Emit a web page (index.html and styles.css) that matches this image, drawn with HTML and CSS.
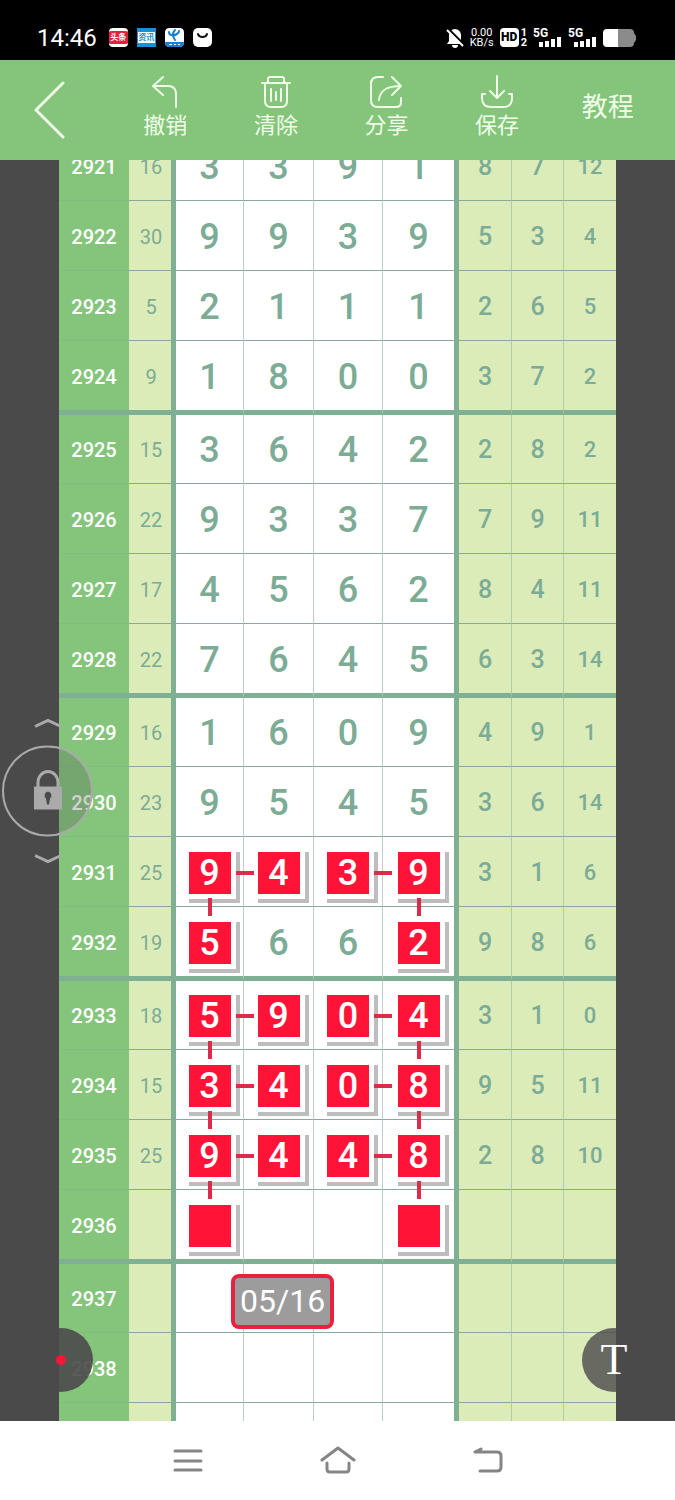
FILE: index.html
```html
<!DOCTYPE html>
<html lang="zh-CN">
<head>
    <meta charset="UTF-8">
    <meta name="viewport" content="width=device-width, initial-scale=1.0">
    <title>走势图</title>
    <link rel="stylesheet" href="styles.css">
</head>
<body>

    <!-- Status bar -->
    <div class="status-bar">
        <span class="time">14:46</span>
        <div class="app-icons">
            <span class="app app-news">头条</span>
            <span class="app app-blue"><b>资讯</b></span>
            <svg class="app" viewBox="0 0 19 19">
                <rect width="19" height="19" rx="4" fill="#fff"/>
                <path d="M0 14h19v1a4 4 0 0 1-4 4H4a4 4 0 0 1-4-4z" fill="#1b7fd0"/>
                <path d="M4 4c0 4 5 4 9 1M10 2c-3 3-3 6 0 10M14 3c0 3-3 4-6 5" fill="none" stroke="#1b7fd0" stroke-width="2" stroke-linecap="round"/>
                <path d="M4 16.500h3M9 16.500h2M13 16.500h2" stroke="#fff" stroke-width="1"/>
            </svg>
            <svg class="app" viewBox="0 0 19 19">
                <rect width="19" height="19" rx="5" fill="#fff"/>
                <path d="M5 6c1 4 8 4 9 0" fill="none" stroke="#111" stroke-width="2" stroke-linecap="round"/>
            </svg>
        </div>
        <div class="system-icons">
            <svg width="18" height="20" viewBox="0 0 18 20">
                <path d="M9 1a6 6 0 0 0-6 6v6l-2 3h16l-2-3V7a6 6 0 0 0-6-6zM6 17h6a3 3 0 0 1-6 0z" fill="#fff"/>
                <path d="M1 0l17 17" stroke="#000" stroke-width="3"/>
                <path d="M1 2l16 16" stroke="#fff" stroke-width="2"/>
            </svg>
            <span class="speed">0.00<br>KB/s</span>
            <span class="hd"><b>HD</b><span>1<br>2</span></span>
            <span class="signal"><span>5G</span>
                <svg width="24" height="11" viewBox="0 0 24 11"><path d="M3 11V6M9 11V5M15 11V3M21 11V1" stroke="#fff" stroke-width="4"/></svg>
            </span>
            <span class="signal"><span>5G</span>
                <svg width="24" height="11" viewBox="0 0 24 11"><path d="M3 11V6M9 11V5M15 11V3M21 11V1" stroke="#fff" stroke-width="4"/></svg>
            </span>
            <svg width="34" height="18" viewBox="0 0 34 18">
                <path d="M15 0h12a4 4 0 0 1 4 4l2 3v4l-2 3a4 4 0 0 1-4 4H15z" fill="#8b8b8b"/>
                <path d="M4 0h11v18H4a4 4 0 0 1-4-4V4a4 4 0 0 1 4-4z" fill="#fff"/>
            </svg>
        </div>
    </div>

    <!-- Toolbar -->
    <header class="toolbar">
        <button class="back" aria-label="返回">
            <svg width="32" height="58" viewBox="0 0 32 58"><path d="M29 2L2 29l27 27"/></svg>
        </button>
        <button class="tool">
            <svg width="34" height="34" viewBox="0 0 34 34"><path d="M15 2L5 11l10 9M5 11h15q8 0 8 8v13"/></svg>
            撤销
        </button>
        <button class="tool">
            <svg width="34" height="34" viewBox="0 0 34 34"><path d="M3 8h28M9 8V4q0-2 2-2h12q2 0 2 2v4M6 8v18q0 6 6 6h10q6 0 6-6V8M12 14v12M17 17v8M22 14v12"/></svg>
            清除
        </button>
        <button class="tool">
            <svg width="34" height="34" viewBox="0 0 34 34"><path d="M14 2h-5q-7 0-7 7v16q0 7 7 7h18q5 0 5-5v-4M23 2l9 9-9 9M32 11C18 11 11 15 10 25"/></svg>
            分享
        </button>
        <button class="tool">
            <svg width="34" height="34" viewBox="0 0 34 34"><path d="M17 1v22M10 16l7 7 7-7M5 19H2v4q0 9 9 9h12q9 0 9-9v-4h-3"/></svg>
            保存
        </button>
        <button class="tool tutorial">教程</button>
    </header>

    <!-- Number chart -->
    <main class="board">
        <table class="chart">
            <colgroup>
                <col class="c-issue"><col class="c-sum">
                <col class="c-n1"><col class="c-n2"><col class="c-n3"><col class="c-n4">
                <col class="c-t1"><col class="c-t2"><col class="c-t3">
            </colgroup>
            <tbody>
                <tr><th>2921</th><td>16</td><td>3</td><td>3</td><td>9</td><td>1</td><td>8</td><td>7</td><td>12</td></tr>
                <tr><th>2922</th><td>30</td><td>9</td><td>9</td><td>3</td><td>9</td><td>5</td><td>3</td><td>4</td></tr>
                <tr><th>2923</th><td>5</td><td>2</td><td>1</td><td>1</td><td>1</td><td>2</td><td>6</td><td>5</td></tr>
                <tr><th>2924</th><td>9</td><td>1</td><td>8</td><td>0</td><td>0</td><td>3</td><td>7</td><td>2</td></tr>
                <tr><th>2925</th><td>15</td><td>3</td><td>6</td><td>4</td><td>2</td><td>2</td><td>8</td><td>2</td></tr>
                <tr><th>2926</th><td>22</td><td>9</td><td>3</td><td>3</td><td>7</td><td>7</td><td>9</td><td>11</td></tr>
                <tr><th>2927</th><td>17</td><td>4</td><td>5</td><td>6</td><td>2</td><td>8</td><td>4</td><td>11</td></tr>
                <tr><th>2928</th><td>22</td><td>7</td><td>6</td><td>4</td><td>5</td><td>6</td><td>3</td><td>14</td></tr>
                <tr><th>2929</th><td>16</td><td>1</td><td>6</td><td>0</td><td>9</td><td>4</td><td>9</td><td>1</td></tr>
                <tr><th>2930</th><td>23</td><td>9</td><td>5</td><td>4</td><td>5</td><td>3</td><td>6</td><td>14</td></tr>
                <tr>
                    <th>2931</th><td>25</td>
                    <td><span class="pick right down">9<i></i></span></td><td><span class="pick">4</span></td>
                    <td><span class="pick right">3</span></td><td><span class="pick down">9<i></i></span></td>
                    <td>3</td><td>1</td><td>6</td>
                </tr>
                <tr>
                    <th>2932</th><td>19</td>
                    <td><span class="pick">5</span></td><td>6</td>
                    <td>6</td><td><span class="pick">2</span></td>
                    <td>9</td><td>8</td><td>6</td>
                </tr>
                <tr>
                    <th>2933</th><td>18</td>
                    <td><span class="pick right down">5<i></i></span></td><td><span class="pick">9</span></td>
                    <td><span class="pick right">0</span></td><td><span class="pick down">4<i></i></span></td>
                    <td>3</td><td>1</td><td>0</td>
                </tr>
                <tr>
                    <th>2934</th><td>15</td>
                    <td><span class="pick right down">3<i></i></span></td><td><span class="pick">4</span></td>
                    <td><span class="pick right">0</span></td><td><span class="pick down">8<i></i></span></td>
                    <td>9</td><td>5</td><td>11</td>
                </tr>
                <tr>
                    <th>2935</th><td>25</td>
                    <td><span class="pick right down">9<i></i></span></td><td><span class="pick">4</span></td>
                    <td><span class="pick right">4</span></td><td><span class="pick down">8<i></i></span></td>
                    <td>2</td><td>8</td><td>10</td>
                </tr>
                <tr>
                    <th>2936</th><td></td>
                    <td><span class="pick"></span></td><td></td>
                    <td></td><td><span class="pick"></span></td>
                    <td></td><td></td><td></td>
                </tr>
                <tr><th>2937</th><td></td><td></td><td></td><td></td><td></td><td></td><td></td><td></td></tr>
                <tr><th>2938</th><td></td><td></td><td></td><td></td><td></td><td></td><td></td><td></td></tr>
                <tr><th></th><td></td><td></td><td></td><td></td><td></td><td></td><td></td><td></td></tr>
            </tbody>
        </table>

        <!-- Floating things over the chart -->
        <div class="date-tag">05/16</div>

        <div class="lock">
            <svg width="28" height="10" viewBox="0 0 28 10"><path d="M1 8l13-6 13 6"/></svg>
            <button aria-label="锁定">
                <svg width="30" height="42" viewBox="0 0 30 42">
                    <path d="M5 18v-5a10 11 0 0 1 20 0v5"/>
                    <path class="body" fill-rule="evenodd" d="M1 17h28v23H1zM15 22a4 4 0 0 0-2 7l1 6h2l1-6a4 4 0 0 0-2-7z"/>
                </svg>
            </button>
            <svg width="28" height="10" viewBox="0 0 28 10"><path d="M1 2l13 6 13-6"/></svg>
        </div>

        <button class="disc color-disc" aria-label="颜色"><i></i></button>
        <button class="disc text-disc">T</button>
    </main>

    <!-- System navigation -->
    <nav class="nav-bar">
        <button aria-label="菜单">
            <svg width="30" height="26" viewBox="0 0 30 26"><path d="M2 3h26M2 13h26M2 22h26"/></svg>
        </button>
        <button aria-label="主页">
            <svg width="36" height="30" viewBox="0 0 36 30"><path d="M2 14L18 2l16 12M7 17v6q0 3 3 3h16q3 0 3-3v-6"/></svg>
        </button>
        <button aria-label="后退">
            <svg width="32" height="28" viewBox="0 0 32 28"><path d="M9 2L3 5h22q4 0 4 4v11q0 4-4 4H8"/></svg>
        </button>
    </nav>

</body>
</html>
```

FILE: styles.css
```css
*,
*::before,
*::after {
    box-sizing: border-box;
}

body {
    margin: 0;
    height: 100vh;
    display: flex;
    flex-direction: column;
    font-family: Roboto, "Noto Sans CJK SC", sans-serif;
    background: #4b4a4b;
}

button {
    border: none;
    padding: 0;
    background: none;
    font-family: inherit;
    cursor: pointer;
}

svg {
    display: block;
    flex: none;
}

/* Status bar */
.status-bar {
    flex: none;
    height: 60px;
    padding: 15px 38px 0 37px;
    display: flex;
    align-items: center;
    background: #000;
    color: #fff;
}

.time {
    font-size: 24px;
    line-height: 24px;
}

.app-icons {
    display: flex;
    gap: 9px;
    margin-left: 12px;
}

.app {
    width: 19px;
    height: 19px;
    border-radius: 4px;
    overflow: hidden;
    text-align: center;
    font-size: 8px;
    line-height: 19px;
}

.app-news {
    background: #e3203c;
    border-top: 3px solid #fff;
    border-bottom: 3px solid #fff;
    line-height: 13px;
    font-weight: bold;
}

.app-blue {
    background: #1b8fd0;
    border-radius: 0;
    padding: 4px 1px;
}

.app-blue b {
    display: block;
    background: #fff;
    color: #1b8fd0;
    line-height: 11px;
}

.system-icons {
    margin-left: auto;
    display: flex;
    align-items: center;
    gap: 6px;
}

.speed {
    font-size: 11px;
    line-height: 10px;
    text-align: center;
}

.hd {
    display: flex;
    align-items: center;
    gap: 2px;
    font-size: 11px;
    line-height: 10px;
    font-weight: bold;
}

.hd b {
    width: 19px;
    height: 19px;
    border-radius: 4px;
    background: #fff;
    color: #000;
    font-size: 12px;
    line-height: 19px;
    text-align: center;
}

.signal {
    display: flex;
    flex-direction: column;
    font-size: 12px;
    line-height: 10px;
    font-weight: bold;
}

.signal svg {
    margin: -2px 0 0 5px;
}

/* Toolbar */
.toolbar {
    flex: none;
    height: 100px;
    padding-right: 12px;
    display: flex;
    background: #84c47b;
}

.toolbar svg {
    fill: none;
    stroke: #f0ffe8;
    stroke-width: 2;
    stroke-linecap: round;
    stroke-linejoin: round;
}

.back {
    width: 110px;
    padding-left: 34px;
}

.back svg {
    stroke-width: 3;
}

.tool {
    flex: 1;
    display: flex;
    flex-direction: column;
    align-items: center;
    justify-content: center;
    gap: 5px;
    padding-bottom: 8px;
    color: #f0ffe8;
    font-size: 22px;
    line-height: 24px;
}

.tutorial {
    font-size: 26px;
    padding-bottom: 6px;
}

/* Chart */
.board {
    flex: 1;
    min-height: 0;
    position: relative;
    overflow: hidden;
    padding: 0 59px;
}

.chart {
    width: 100%;
    margin-top: -28px;
    table-layout: fixed;
    border-collapse: separate;
    border-spacing: 0;
    color: #7cab96;
}

.c-issue { width: 70px; }
.c-sum { width: 47px; }
.c-n1 { width: 68px; }
.c-n2 { width: 70px; }
.c-n3 { width: 69px; }
.c-n4 { width: 76px; }
.c-t1 { width: 53px; }
.c-t2 { width: 52px; }
.c-t3 { width: 52px; }

.chart th,
.chart td {
    height: 70px;
    padding: 2px 0 0;
    text-align: center;
    line-height: 42px;
    border-right: 1px solid #bccfc6;
    border-bottom: 1px solid #8aa99a;
    background: #fff;
    font-size: 36px;
    font-weight: 500;
}

.chart th {
    background: #84c47b;
    color: #fff;
    font-size: 20px;
    border-right: none;
    border-bottom-color: #80bd80;
}

.chart td:nth-child(2) {
    padding-left: 2px;
    background: #dbecb9;
    font-size: 20px;
    font-weight: 400;
    border-right: 5px solid #80b094;
}

.chart td:nth-child(6) {
    border-right: 5px solid #80b094;
}

.chart td:nth-child(n+7) {
    background: #dbecb9;
    font-size: 25px;
    border-right-color: #b3cb9f;
}

.chart td:nth-child(9) {
    font-size: 22px;
    border-right: none;
}

/* every fourth issue closes a block */
.chart tr:nth-child(4n+1) > * {
    height: 69px;
}

.chart tr:nth-child(4n) > * {
    height: 74px;
    border-bottom: 5px solid #80b094;
}

/* Picked numbers */
.pick {
    position: relative;
    z-index: 1;
    display: block;
    width: 42px;
    height: 42px;
    margin: 0 auto;
    background: #ff1437;
    color: #fff;
}

.pick::before {
    content: "";
    position: absolute;
    z-index: -1;
    top: 0;
    left: 0;
    width: 51px;
    height: 51px;
    border-right: 4px solid #bdbdbd;
    border-bottom: 4px solid #bdbdbd;
    background: linear-gradient(#ff1437, #ff1437) 0 0 / 42px 42px no-repeat #fff;
}

.pick.right::after {
    content: "";
    position: absolute;
    top: 19px;
    left: 47px;
    width: 18px;
    height: 4px;
    background: #dc2b4b;
}

.pick i {
    position: absolute;
    top: 46px;
    left: 19px;
    width: 4px;
    height: 18px;
    background: #dc2b4b;
}

/* Floating items */
.date-tag {
    position: absolute;
    z-index: 2;
    left: 231px;
    bottom: 92px;
    padding: 0 5px;
    border: 4px solid #e8213f;
    border-radius: 8px;
    background: #9c9c9c;
    color: #fff;
    font-size: 32px;
    line-height: 47px;
}

.lock {
    position: absolute;
    z-index: 2;
    left: 2px;
    top: 50%;
    transform: translateY(-50%);
    display: flex;
    flex-direction: column;
    align-items: center;
    gap: 17px;
}

.lock svg {
    fill: none;
    stroke: #aaa;
    stroke-width: 3;
}

.lock button {
    width: 91px;
    height: 91px;
    display: flex;
    align-items: center;
    justify-content: center;
    border: 2px solid #aaa;
    border-radius: 50%;
    background: rgba(75, 75, 75, 0.25);
}

.lock .body {
    fill: #aaa;
    stroke: none;
}

.disc {
    position: absolute;
    z-index: 2;
    bottom: 29px;
    width: 64px;
    height: 64px;
    border-radius: 50%;
    background: rgba(75, 74, 75, 0.9);
}

.color-disc {
    left: 29px;
}

.color-disc i {
    display: block;
    width: 10px;
    height: 10px;
    margin: 0 auto;
    border-radius: 50%;
    background: #ff1437;
}

.text-disc {
    right: 29px;
    background: rgba(75, 74, 75, 0.8);
    color: #fff;
    font-family: "Liberation Serif", serif;
    font-size: 44px;
    line-height: 64px;
}

/* System navigation */
.nav-bar {
    flex: none;
    height: 79px;
    display: flex;
    justify-content: center;
    background: #fff;
}

.nav-bar button {
    width: 150px;
    display: flex;
    align-items: center;
    justify-content: center;
}

.nav-bar svg {
    fill: none;
    stroke: #858585;
    stroke-width: 3;
    stroke-linecap: round;
    stroke-linejoin: round;
}
```
